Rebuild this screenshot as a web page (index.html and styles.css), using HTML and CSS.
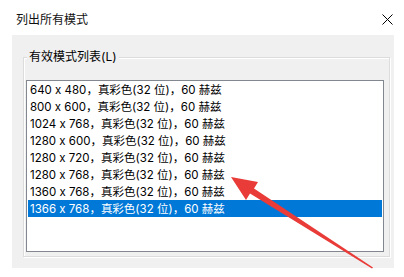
FILE: index.html
```html
<!DOCTYPE html>
<html lang="zh-CN">
<head>
<meta charset="utf-8">
<title>列出所有模式</title>
<link rel="stylesheet" href="styles.css">
</head>
<body>
<div class="dialog">
  <div class="titlebar">
    <span class="title">列出所有模式</span>
    <svg class="close" width="11" height="11" viewBox="0 0 11 11"><path d="M0.5 0.5 L10.5 10.5 M10.5 0.5 L0.5 10.5" stroke="#000" stroke-width="1" fill="none"/></svg>
  </div>
  <div class="panel">
    <div class="group">
      <span class="legend">有效模式列表(L)</span>
      <ul class="list">
        <li>640 x 480<span class="punct">，</span>真彩色(32 位)<span class="punct">，</span>60 赫兹</li>
        <li>800 x 600<span class="punct">，</span>真彩色(32 位)<span class="punct">，</span>60 赫兹</li>
        <li>1024 x 768<span class="punct">，</span>真彩色(32 位)<span class="punct">，</span>60 赫兹</li>
        <li>1280 x 600<span class="punct">，</span>真彩色(32 位)<span class="punct">，</span>60 赫兹</li>
        <li>1280 x 720<span class="punct">，</span>真彩色(32 位)<span class="punct">，</span>60 赫兹</li>
        <li>1280 x 768<span class="punct">，</span>真彩色(32 位)<span class="punct">，</span>60 赫兹</li>
        <li>1360 x 768<span class="punct">，</span>真彩色(32 位)<span class="punct">，</span>60 赫兹</li>
        <li class="selected">1366 x 768<span class="punct">，</span>真彩色(32 位)<span class="punct">，</span>60 赫兹</li>
      </ul>
    </div>
  </div>
  <svg class="arrow" width="404" height="277" viewBox="0 0 404 277">
    <polygon points="231,177 258,182 254,188.5 373,267.5 372,268.5 250,193.5 246,200" fill="#e93b37"/>
  </svg>
</div>
</body>
</html>
```

FILE: styles.css
```css
* { box-sizing: border-box; }
html, body {
  margin: 0;
  padding: 0;
  background: #ffffff;
}
body {
  font-family: "Inter", "Noto Sans CJK SC", sans-serif;
  font-feature-settings: "calt" 0;
  font-size: 12px;
  color: #000;
}
.dialog {
  position: relative;
  width: 404px;
  height: 277px;
  overflow: hidden;
}
.titlebar {
  height: 35px;
  display: flex;
  justify-content: space-between;
  align-items: flex-start;
  padding: 12px 11px 0 16px;
}
.title {
  line-height: 16px;
  color: #111;
}
.close {
  display: block;
  margin-top: 2px;
}
.panel {
  margin-left: 12px;
  width: 382px;
  height: 233px;
  background: #f0f0f0;
  padding: 22px 4px 0 11px;
}
.group {
  position: relative;
  height: 200px;
  border: 1px solid #dcdcdc;
  box-shadow: inset 1px 1px 0 #ffffff, 1px 1px 0 #ffffff;
  padding: 22px 5px 4px 2px;
}
.legend {
  position: absolute;
  top: -9px;
  left: 3px;
  padding: 0 2px;
  line-height: 16px;
  background: #f0f0f0;
}
.list {
  list-style: none;
  margin: 0;
  height: 172px;
  border: 1px solid #828790;
  background: #fff;
  padding: 0 1px 1px 1px;
  font-size: 11.5px;
}
.list li {
  height: 17px;
  line-height: 17px;
  padding-left: 2px;
  white-space: nowrap;
}
.list li.selected {
  background: #0078d7;
  color: #fff;
}
.punct {
  font-family: "Noto Sans CJK TC", sans-serif;
}
.arrow {
  position: absolute;
  left: 0;
  top: 0;
  pointer-events: none;
}
```
